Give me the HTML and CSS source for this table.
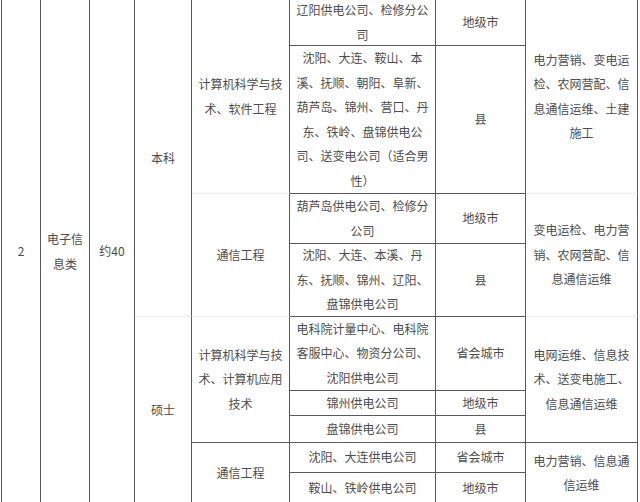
FILE: index.html
```html
<!DOCTYPE html>
<html lang="zh-CN">
<head>
<meta charset="utf-8">
<title>招聘专业表</title>
<link rel="stylesheet" href="styles.css">
</head>
<body>
<div class="sheet">
  <div class="cell c1 span-all">2</div>
  <div class="cell c2 span-all">电子信息类</div>
  <div class="cell c3 span-all">约40</div>

  <div class="cell c4 r1-5 faint">本科</div>
  <div class="cell c4 r5-10">硕士</div>

  <div class="cell c5 r1-3 faint">计算机科学与技术、软件工程</div>
  <div class="cell c5 r3-5 faint">通信工程</div>
  <div class="cell c5 r5-8">计算机科学与技术、计算机应用技术</div>
  <div class="cell c5 r8-10">通信工程</div>

  <div class="cell c6 r1">辽阳供电公司、检修分公司</div>
  <div class="cell c7 r1">地级市</div>
  <div class="cell c8 r1-3 faint">电力营销、变电运检、农网营配、信息通信运维、土建施工</div>

  <div class="cell c6 r2">沈阳、大连、鞍山、本溪、抚顺、朝阳、阜新、葫芦岛、锦州、营口、丹东、铁岭、盘锦供电公司、送变电公司（适合男性）</div>
  <div class="cell c7 r2">县</div>

  <div class="cell c6 r3">葫芦岛供电公司、检修分公司</div>
  <div class="cell c7 r3">地级市</div>
  <div class="cell c8 r3-5 faint">变电运检、电力营销、农网营配、信息通信运维</div>

  <div class="cell c6 r4">沈阳、大连、本溪、丹东、抚顺、锦州、辽阳、盘锦供电公司</div>
  <div class="cell c7 r4">县</div>

  <div class="cell c6 r5">电科院计量中心、电科院客服中心、物资分公司、沈阳供电公司</div>
  <div class="cell c7 r5">省会城市</div>
  <div class="cell c8 r5-8">电网运维、信息技术、送变电施工、信息通信运维</div>

  <div class="cell c6 r6">锦州供电公司</div>
  <div class="cell c7 r6">地级市</div>

  <div class="cell c6 r7">盘锦供电公司</div>
  <div class="cell c7 r7">县</div>

  <div class="cell c6 r8">沈阳、大连供电公司</div>
  <div class="cell c7 r8">省会城市</div>
  <div class="cell c8 r8-10">电力营销、信息通信运维</div>

  <div class="cell c6 r9">鞍山、铁岭供电公司</div>
  <div class="cell c7 r9">地级市</div>
</div>
</body>
</html>
```

FILE: styles.css
```css
html, body {
  margin: 0;
  padding: 0;
  background: #ffffff;
  overflow: hidden;
}

body {
  width: 640px;
  height: 502px;
}

.sheet {
  margin-left: 1px;
  width: 636px;
  display: grid;
  grid-template-columns: 39px 49px 45px 57px 98px 146px 90px 112px;
  grid-template-rows: 46px 148px 50px 73px 74px 25px 27px 30px 31px;
  border-left: 1px solid #5a5a5a;
  font-family: "Noto Sans CJK SC", "Noto Sans", sans-serif;
  font-size: 12px;
  line-height: 24.5px;
  color: #4d4d4d;
}

.cell {
  display: flex;
  align-items: center;
  justify-content: center;
  text-align: center;
  padding: 0 6px;
  border-right: 1px solid #5a5a5a;
  border-bottom: 1px solid #5a5a5a;
  overflow: hidden;
  word-break: normal;
}

.cell.faint {
  border-bottom-color: #ececec;
}

.c1 { grid-column: 1; }
.c2 { grid-column: 2; padding: 0 5px; }
.c3 { grid-column: 3; padding: 0 4px; }
.c4 { grid-column: 4; }
.c5 { grid-column: 5; }
.c6 { grid-column: 6; }
.c7 { grid-column: 7; }
.c8 { grid-column: 8; }

.span-all { grid-row: 1 / 10; }

.r1 { grid-row: 1; }
.r2 { grid-row: 2; }
.r3 { grid-row: 3; }
.r4 { grid-row: 4; }
.r5 { grid-row: 5; }
.r6 { grid-row: 6; }
.r7 { grid-row: 7; }
.r8 { grid-row: 8; }
.r9 { grid-row: 9; }

.r1-3 { grid-row: 1 / 3; }
.r1-5 { grid-row: 1 / 5; }
.r3-5 { grid-row: 3 / 5; }
.r5-8 { grid-row: 5 / 8; }
.r5-10 { grid-row: 5 / 10; }
.r8-10 { grid-row: 8 / 10; }
```
